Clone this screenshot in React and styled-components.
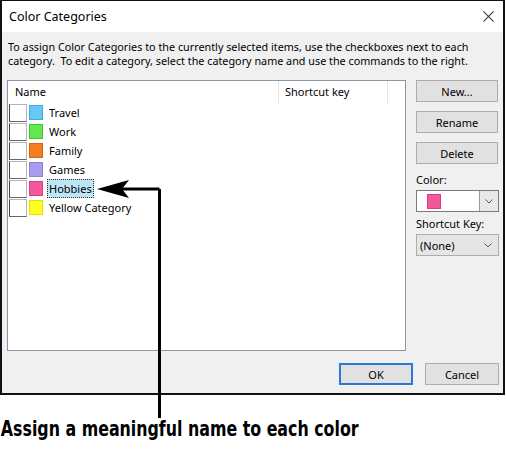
import React from 'react'
import styled, { createGlobalStyle } from 'styled-components'

const GlobalStyle = createGlobalStyle`
  html, body {
    margin: 0;
    padding: 0;
    background: #fff;
  }
  body {
    font-family: "Noto Sans", "Open Sans", sans-serif;
    color: #000;
  }
`

const categories = [
  { name: 'Travel', color: '#66c8f5', edge: '#4aa8d8' },
  { name: 'Work', color: '#62e84e', edge: '#45c437' },
  { name: 'Family', color: '#f57c1f', edge: '#d8650f' },
  { name: 'Games', color: '#a99cf0', edge: '#8c7fd6' },
  { name: 'Hobbies', color: '#f2589a', edge: '#d53f80', selected: true },
  { name: 'Yellow Category', color: '#ffff22', edge: '#e0e000' },
]

const App = () => {
  return (
    <Page>
      <GlobalStyle />
      <Dialog>
        <TitleBar>
          <span>Color Categories</span>
          <CloseIcon viewBox="0 0 12 12">
            <path d="M0.5 0.5 L11.5 11.5 M11.5 0.5 L0.5 11.5" stroke="#333" strokeWidth="1.1" />
          </CloseIcon>
        </TitleBar>
        <Body>
          <Description>
            To assign Color Categories to the currently selected items, use the checkboxes next to each
            category.&nbsp; To edit a category, select the category name and use the commands to the right.
          </Description>
          <Main>
            <ListBox>
              <Header>
                <HeaderCell $width={270}>Name</HeaderCell>
                <HeaderCell $width={109}>Shortcut key</HeaderCell>
              </Header>
              {categories.map((c) => (
                <Row key={c.name}>
                  <Check />
                  <Swatch $color={c.color} $edge={c.edge} />
                  <Label $selected={c.selected}>{c.name}</Label>
                </Row>
              ))}
            </ListBox>
            <Side>
              <Button>New...</Button>
              <Button>Rename</Button>
              <Button>Delete</Button>
              <FieldLabel $top={0}>Color:</FieldLabel>
              <ColorCombo>
                <ComboValue>
                  <Swatch $color="#f2589a" $edge="#d53f80" />
                </ComboValue>
                <DropButton>
                  <Chevron />
                </DropButton>
              </ColorCombo>
              <FieldLabel $top={-4}>Shortcut Key:</FieldLabel>
              <SelectCombo>
                <span>(None)</span>
                <Chevron />
              </SelectCombo>
            </Side>
          </Main>
          <Footer>
            <Button $primary $width={74}>OK</Button>
            <Button $width={74}>Cancel</Button>
          </Footer>
        </Body>
      </Dialog>
      <Caption>Assign a meaningful name to each color</Caption>
      <Arrow viewBox="0 0 506 450" width="506" height="450">
        <path d="M159.5 189 L159.5 418 M159.5 189 L122 189" stroke="#000" strokeWidth="3" fill="none" />
        <polygon points="97,189 129,180 122,189 129,198" fill="#000" />
      </Arrow>
    </Page>
  )
}

export default App

const Chevron = () => (
  <ChevronSvg viewBox="0 0 8 5">
    <path d="M0.5 0.5 L4 4 L7.5 0.5" stroke="#444" strokeWidth="0.9" fill="none" />
  </ChevronSvg>
)

const Page = styled.div`
  position: relative;
  width: 506px;
  height: 450px;
  overflow: hidden;
`

const Dialog = styled.div`
  width: 505px;
  height: 395px;
  box-sizing: border-box;
  border: 2px solid #111;
  border-top-width: 1px;
  display: flex;
  flex-direction: column;
`

const TitleBar = styled.div`
  height: 31px;
  flex: none;
  background: #fff;
  display: flex;
  align-items: center;
  justify-content: space-between;
  padding: 0 9px 0 7px;
  font-size: 12.5px;
`

const CloseIcon = styled.svg`
  width: 11px;
  height: 11px;
`

const Body = styled.div`
  flex: 1;
  background: #f0f0f0;
  padding: 8px 4px 5px 5px;
  display: flex;
  flex-direction: column;
`

const Description = styled.p`
  margin: 0 0 0 1px;
  font-size: 10.8px;
  line-height: 14px;
`

const Main = styled.div`
  display: flex;
  gap: 10px;
  margin-top: 12px;
  height: 271px;
`

const ListBox = styled.div`
  width: 399px;
  box-sizing: border-box;
  background: #fff;
  border: 1px solid #8a96a8;
  padding: 0 1px;
`

const Header = styled.div`
  display: flex;
  height: 22px;
`

const HeaderCell = styled.div`
  width: ${(p) => p.$width}px;
  box-sizing: border-box;
  padding-left: 6px;
  font-size: 11px;
  line-height: 22px;
  border-right: 1px solid #e5e5e5;
`

const Row = styled.div`
  display: flex;
  align-items: center;
  height: 19px;
`

const Check = styled.div`
  width: 18px;
  height: 18px;
  box-sizing: border-box;
  background: #fff;
  border: 1px solid #b4b4b4;
  border-left-color: #444;
  border-bottom-color: #666;
`

const Swatch = styled.div`
  width: 14px;
  height: 15px;
  box-sizing: border-box;
  margin-left: 2px;
  background: ${(p) => p.$color};
  border: 1px solid ${(p) => p.$edge};
`

const Label = styled.span`
  margin-left: 4px;
  padding: 0 1px;
  font-size: 11px;
  line-height: 17px;
  border: 1px dotted ${(p) => (p.$selected ? '#333' : 'transparent')};
  background: ${(p) => (p.$selected ? '#bde6f7' : 'transparent')};
`

const Side = styled.div`
  width: 83px;
  display: flex;
  flex-direction: column;
  gap: 9px;
`

const Button = styled.div`
  width: ${(p) => p.$width || 82}px;
  height: 22px;
  box-sizing: border-box;
  background: #e1e1e1;
  border: ${(p) => (p.$primary ? '2px solid #2a7ad4' : '1px solid #adadad')};
  display: flex;
  align-items: center;
  justify-content: center;
  font-size: 11px;
`

const FieldLabel = styled.div`
  font-size: 11px;
  line-height: 14px;
  margin: ${(p) => p.$top}px 0 -6px 0;
`

const ColorCombo = styled.div`
  height: 22px;
  box-sizing: border-box;
  border: 1px solid #7a7a7a;
  background: #fff;
  display: flex;
`

const ComboValue = styled.div`
  flex: 1;
  display: flex;
  align-items: center;
  padding-left: 8px;
`

const DropButton = styled.div`
  width: 18px;
  background: #e8e8e8;
  border-left: 1px solid #9a9a9a;
  display: flex;
  align-items: center;
  justify-content: center;
`

const SelectCombo = styled.div`
  height: 22px;
  box-sizing: border-box;
  border: 1px solid #adadad;
  background: #e5e5e5;
  display: flex;
  align-items: center;
  justify-content: space-between;
  padding: 0 6px 0 3px;
  font-size: 11px;
`

const ChevronSvg = styled.svg`
  width: 8px;
  height: 5px;
`

const Footer = styled.div`
  display: flex;
  justify-content: flex-end;
  gap: 12px;
  margin-top: 12px;
`

const Caption = styled.div`
  margin-top: 21px;
  padding-left: 1px;
  font-family: "DejaVu Sans Condensed", "DejaVu Sans", sans-serif;
  font-weight: bold;
  font-size: 22px;
  line-height: 26px;
  white-space: nowrap;
  transform: scaleX(0.8);
  transform-origin: left center;
`

const Arrow = styled.svg`
  position: absolute;
  left: 0;
  top: 0;
  pointer-events: none;
`
